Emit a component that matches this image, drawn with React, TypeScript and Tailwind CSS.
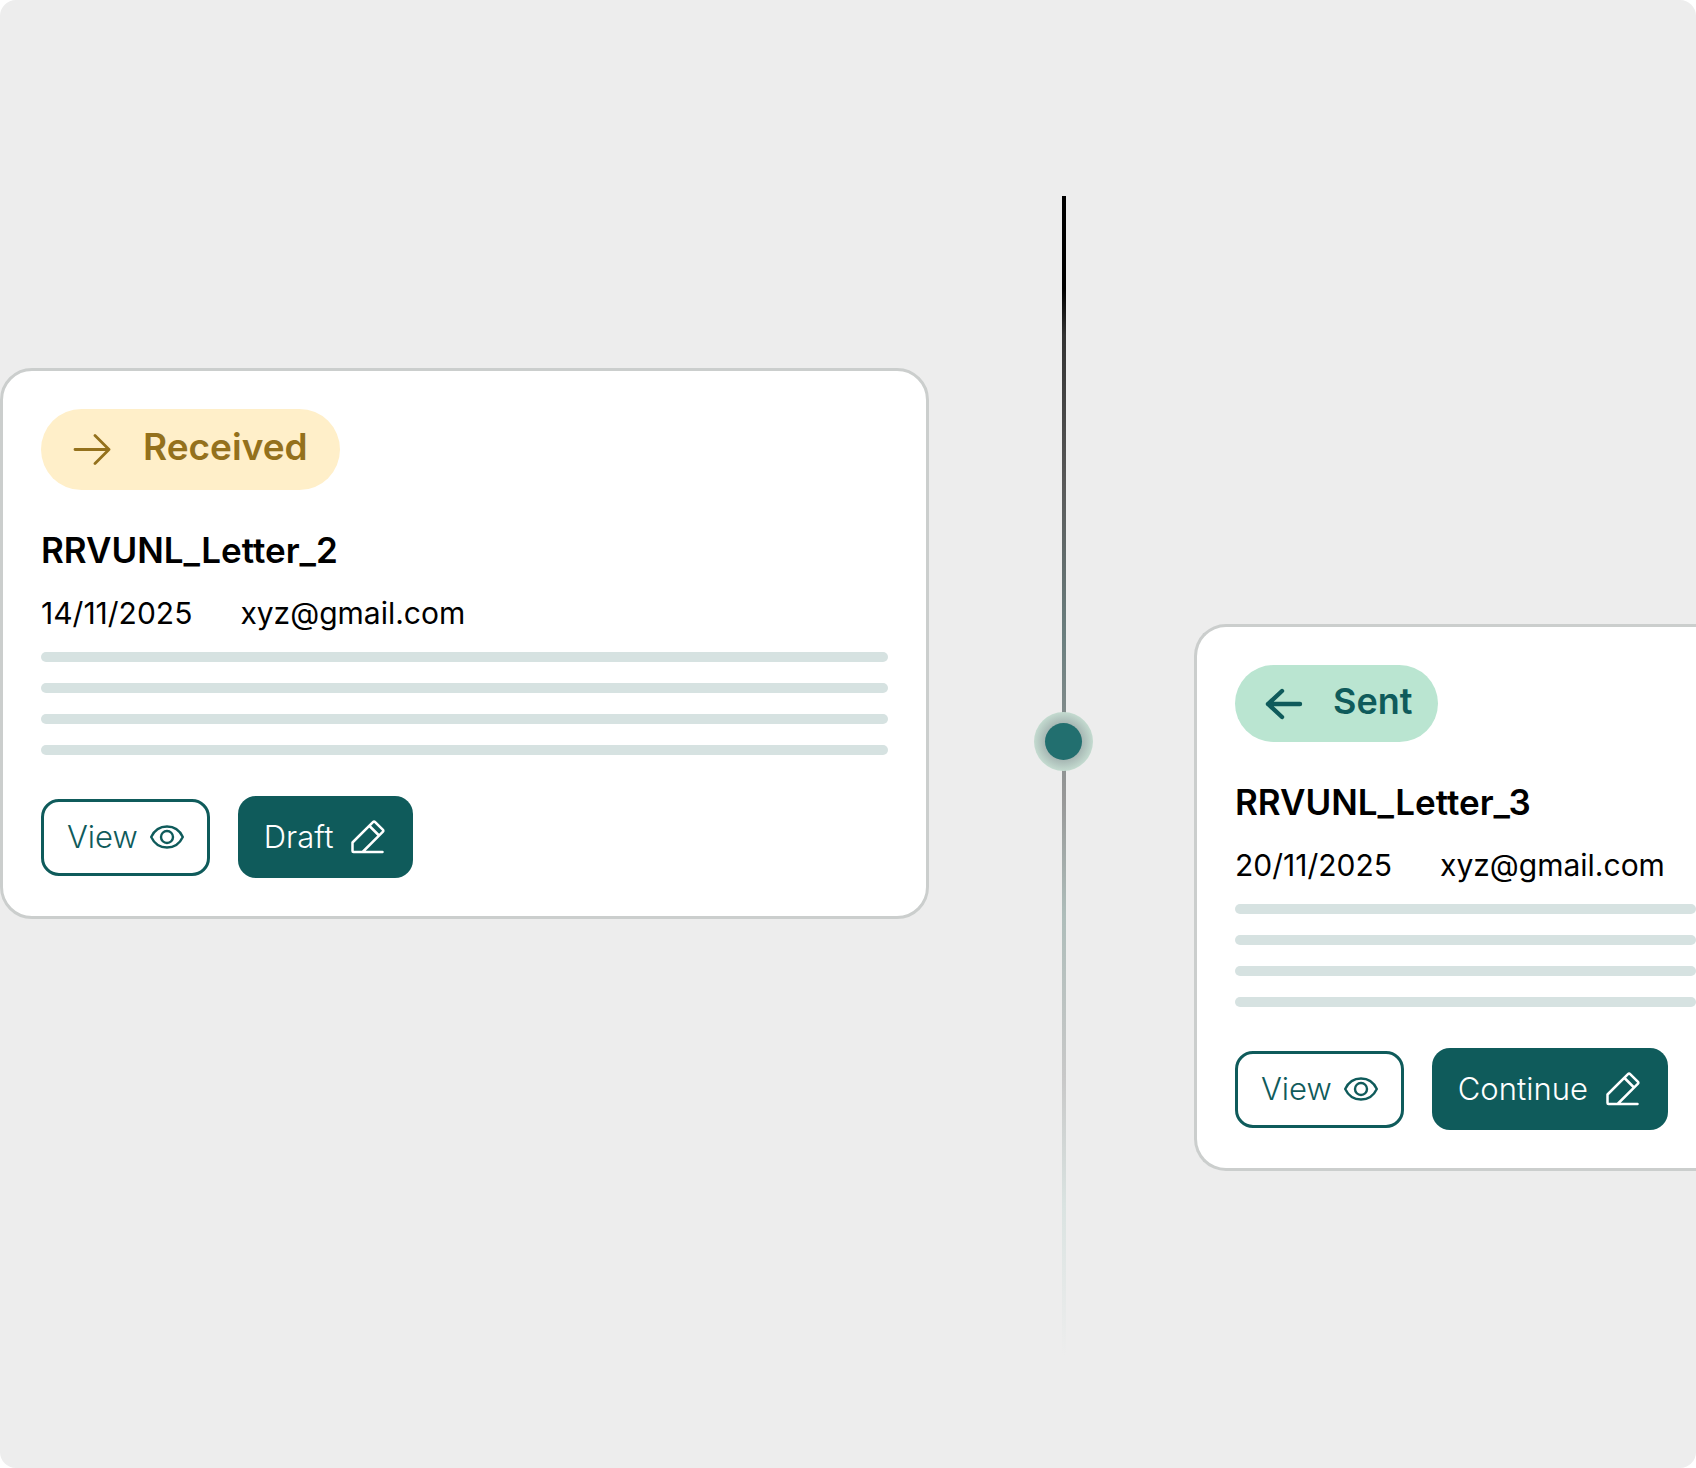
type Letter = {
  status: "received" | "sent";
  title: string;
  date: string;
  email: string;
  action: string;
};

const LETTERS: Letter[] = [
  { status: "received", title: "RRVUNL_Letter_2", date: "14/11/2025", email: "xyz@gmail.com", action: "Draft" },
  { status: "sent", title: "RRVUNL_Letter_3", date: "20/11/2025", email: "xyz@gmail.com", action: "Continue" },
];

function ArrowRight() {
  return (
    <svg width="38" height="32" viewBox="0 0 38 32" fill="none" stroke="currentColor" strokeWidth="2.8" strokeLinecap="round" strokeLinejoin="round" aria-hidden="true">
      <path d="M2 15.5H36M22 1.5L36 15.5L22 29.5" />
    </svg>
  );
}

function ArrowLeft() {
  return (
    <svg width="38" height="32" viewBox="0 0 38 32" fill="none" stroke="currentColor" strokeWidth="4.4" strokeLinecap="round" strokeLinejoin="round" aria-hidden="true">
      <path d="M35 16H3M17 3L3 16L17 29" />
    </svg>
  );
}

function EyeIcon() {
  return (
    <svg width="34" height="24" viewBox="0 0 34 24" fill="none" stroke="currentColor" strokeWidth="2.4" strokeLinejoin="round" aria-hidden="true">
      <path d="M1.2 12C4 6 9.5 1.5 17 1.5S30 6 32.8 12C30 18 24.5 22.5 17 22.5S4 18 1.2 12Z" />
      <circle cx="17" cy="12" r="6" />
    </svg>
  );
}

function PencilIcon() {
  return (
    <svg width="34" height="34" viewBox="0 0 34 34" fill="none" stroke="currentColor" strokeWidth="2.5" strokeLinecap="round" strokeLinejoin="round" aria-hidden="true">
      <path d="M12 32H2.5A1 1 0 0 1 1.5 31V22.5L22.2 1.8A1.2 1.2 0 0 1 23.9 1.8L32 9.9A1.2 1.2 0 0 1 32 11.6L11.6 32H31.5M18.5 6L28 15.5" />
    </svg>
  );
}

function StatusBadge({ status }: { status: Letter["status"] }) {
  if (status === "received") {
    return (
      <div className="flex h-[81px] w-fit items-center gap-8 rounded-full bg-[#ffefc9] px-8 text-[#94711c]">
        <ArrowRight />
        <span className="pb-1.5 text-[37px] leading-10 font-semibold">Received</span>
      </div>
    );
  }
  return (
    <div className="flex h-[77px] w-fit items-center gap-[30px] rounded-full bg-[#bae5d1] pr-[26px] pl-[30px] text-[#0f5b5b]">
      <ArrowLeft />
      <span className="pb-1.5 text-[36px] leading-10 font-semibold">Sent</span>
    </div>
  );
}

function LetterCard({ letter, className }: { letter: Letter; className: string }) {
  return (
    <article className={`border-[#cbcecd] bg-white ${className}`}>
      <StatusBadge status={letter.status} />
      <h2 className="mt-[38px] text-[35px] leading-[44px] font-semibold text-black">{letter.title}</h2>
      <div className="mt-[23px] flex gap-12 text-[30px] leading-9 text-black">
        <span>{letter.date}</span>
        <span>{letter.email}</span>
      </div>
      <div className="mt-[21px] flex flex-col gap-[21px]">
        {[0, 1, 2, 3].map((line) => (
          <div key={line} className="h-[10px] rounded-full bg-[#d6e2e1]" />
        ))}
      </div>
      <div className="mt-[41px] flex items-center gap-7 text-[31px] leading-9 font-light">
        <button type="button" className="flex h-[77px] items-center gap-3 rounded-[18px] border-[3px] border-[#0f5b5b] px-[23px] text-[#0f5b5b]">
          View
          <EyeIcon />
        </button>
        <button type="button" className="flex h-[82px] items-center gap-[18px] rounded-[18px] bg-[#0f5b5b] pr-7 pl-[26px] text-white">
          {letter.action}
          <PencilIcon />
        </button>
      </div>
    </article>
  );
}

function Timeline() {
  return (
    <div className="relative mt-[196px] flex h-[1160px] justify-center pl-1">
      <div className="w-1 bg-[linear-gradient(#000_8%,#333_12%,#5a5a5a_25%,#6b7f7f_38%,#989898_52%,#aebdba_62%,#c8c8c8_76%,#dae3e1_87%,#ededed)]" />
      <div className="absolute top-[516px] flex size-[59px] items-center justify-center rounded-full bg-[radial-gradient(closest-side,#a5b5b2_60%,#c4dbd0_100%)]">
        <div className="size-[37px] rounded-full bg-[#226f6f]" />
      </div>
    </div>
  );
}

export default function App() {
  return (
    <div className="bg-white font-['Inter',sans-serif]">
      <main className="grid min-h-screen grid-cols-[929fr_265fr_502fr] items-start overflow-hidden rounded-[16px] bg-[#ededed]">
        <LetterCard letter={LETTERS[0]} className="mt-[368px] rounded-[32px] border-[3px] p-[38px]" />
        <Timeline />
        <LetterCard letter={LETTERS[1]} className="mt-[624px] rounded-l-[32px] border-[3px] border-r-0 py-[38px] pl-[38px]" />
      </main>
    </div>
  );
}
